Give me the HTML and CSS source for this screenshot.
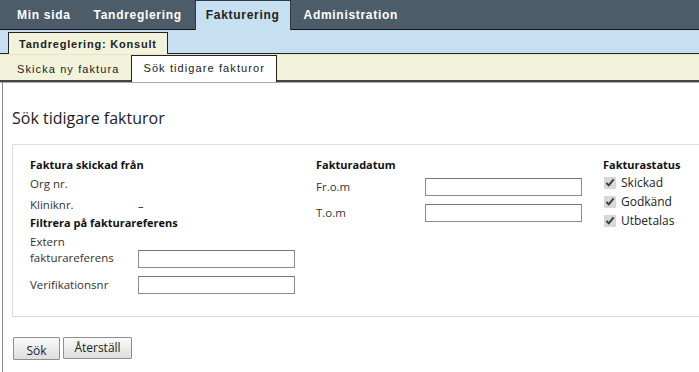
FILE: index.html
```html
<!DOCTYPE html>
<html lang="sv">
<head>
<meta charset="utf-8">
<title>Sök tidigare fakturor</title>
<link rel="stylesheet" href="styles.css">
</head>
<body>
<nav class="topnav">
  <a class="topnav-item">Min sida</a>
  <a class="topnav-item">Tandreglering</a>
  <a class="topnav-item is-active">Fakturering</a>
  <a class="topnav-item">Administration</a>
</nav>
<div class="subnav">
  <a class="subnav-item is-active">Tandreglering: Konsult</a>
</div>
<div class="tabs">
  <a class="tab">Skicka ny faktura</a>
  <a class="tab is-active">Sök tidigare fakturor</a>
</div>
<main class="content">
  <h1 class="page-title">Sök tidigare fakturor</h1>
  <form class="search-box">
    <div class="col col-from">
      <h2 class="col-title">Faktura skickad från</h2>
      <div class="row row-org"><span class="label">Org nr.</span><span class="value"></span></div>
      <div class="row row-klinik"><span class="label">Kliniknr.</span><span class="value">–</span></div>
      <h2 class="col-title">Filtrera på fakturareferens</h2>
      <div class="row row-extern"><span class="label">Extern<br>fakturareferens</span><input class="field" type="text"></div>
      <div class="row row-verif"><span class="label">Verifikationsnr</span><input class="field" type="text"></div>
    </div>
    <div class="col col-date">
      <h2 class="col-title">Fakturadatum</h2>
      <div class="row row-from"><span class="label">Fr.o.m</span><input class="field" type="text"></div>
      <div class="row row-tom"><span class="label">T.o.m</span><input class="field" type="text"></div>
    </div>
    <div class="col col-status">
      <h2 class="col-title">Fakturastatus</h2>
      <label class="check"><input type="checkbox" checked><span>Skickad</span></label>
      <label class="check"><input type="checkbox" checked><span>Godkänd</span></label>
      <label class="check"><input type="checkbox" checked><span>Utbetalas</span></label>
    </div>
  </form>
  <div class="actions">
    <button class="btn btn-search" type="button">Sök</button>
    <button class="btn btn-reset" type="button">Återställ</button>
  </div>
</main>
</body>
</html>
```
FILE: styles.css
```css
html, body {
  margin: 0;
  padding: 0;
  overflow: hidden;
  background: #fff;
}
body {
  font-family: "Open Sans", "DejaVu Sans", sans-serif;
  color: #222;
  height: 372px;
}

/* top navigation */
.topnav {
  display: flex;
  align-items: flex-end;
  height: 29px;
  background: #4c5c69;
  border-bottom: 1px solid #111;
  padding-left: 7px;
  font-family: "Liberation Sans", Arial, sans-serif;
  font-weight: bold;
  font-size: 12px;
  letter-spacing: 0.7px;
}
.topnav-item {
  display: flex;
  align-items: center;
  height: 24px;
  padding: 0 10px 2px;
  margin-right: 3px;
  color: #fff;
}
.topnav-item.is-active {
  background: #c6e0f2;
  color: #222;
  border: 1px solid #2d3a44;
  border-bottom: none;
  margin-bottom: -1px;
  height: 26px;
  padding-top: 1px;
}

/* second row */
.subnav {
  display: flex;
  align-items: flex-end;
  height: 23px;
  background: #c6e0f2;
  border-bottom: 1px solid #222;
  padding-left: 8px;
  font-family: "Liberation Sans", Arial, sans-serif;
  font-size: 11px;
  font-weight: bold;
  letter-spacing: 0.8px;
}
.subnav-item {
  display: flex;
  align-items: center;
  height: 21px;
  padding: 0 10px;
  background: #f3f3dc;
  border: 1px solid #222;
  border-bottom: none;
  margin-bottom: -1px;
  color: #222;
}

/* third row */
.tabs {
  display: flex;
  align-items: flex-end;
  height: 25px;
  background: #f3f3dc;
  border-top: 1px solid #e6e6c8;
  border-bottom: 2px solid #444;
  box-shadow: 0 1px 0 #aaa;
  padding-left: 6px;
  font-family: "Liberation Sans", Arial, sans-serif;
  font-size: 11px;
  letter-spacing: 1.1px;
}
.tab {
  display: flex;
  align-items: center;
  height: 22px;
  padding: 0 10px;
  color: #222;
  border: 1px solid transparent;
  border-bottom: none;
  margin-right: 1px;
}
.tab.is-active {
  background: #fff;
  border-color: #222;
  margin-bottom: -2px;
  height: 24px;
  padding: 0 11px 2px;
}

/* content */
.content {
  border-left: 1px solid #888;
  margin-left: 2px;
  padding: 26px 0 0 9px;
  height: 264px;
}
.page-title {
  margin: 0;
  font-weight: normal;
  font-size: 16px;
  line-height: 20px;
  color: #222;
}
.search-box {
  display: grid;
  grid-template-columns: 286px 287px 1fr;
  margin: 16px -20px 0 0;
  padding: 12px 0 22px 17px;
  border: 1px solid #dcdcdc;
  border-right: none;
  font-size: 11px;
}
.col-title {
  margin: 0;
  font-size: 11px;
  font-weight: bold;
  line-height: 16px;
  color: #111;
}
.row {
  display: grid;
  grid-template-columns: 108px 157px;
  align-items: center;
}
.label {
  font-size: 11.5px;
  line-height: 16px;
  color: #333;
}
.row-org { height: 22px; }
.row-klinik { height: 20px; }
.row-extern {
  margin-top: 3px;
  align-items: end;
}
.row-extern .label { padding-bottom: 2px; }
.row-verif { margin-top: 8px; }
.row-from { margin-top: 5px; }
.row-tom { margin-top: 8px; }
.col-date .row { grid-template-columns: 109px 157px; }

.field {
  box-sizing: border-box;
  width: 157px;
  height: 18px;
  margin: 0;
  border: 1px solid #8a8a8a;
  border-top-color: #777;
  background: #fff;
  font: inherit;
  padding: 0 3px;
}

.col-status { display: flex; flex-direction: column; }
.check {
  display: flex;
  align-items: center;
  height: 19px;
  font-size: 12px;
  color: #222;
}
.check input {
  width: 12px;
  height: 12px;
  margin: 0 5px 0 1px;
  accent-color: #d8d8d8;
}

.actions {
  display: flex;
  gap: 3px;
  margin-top: 20px;
  margin-left: 1px;
  align-items: flex-start;
}
.btn {
  font-family: "Open Sans", "DejaVu Sans", sans-serif;
  font-size: 12px;
  color: #222;
  background: linear-gradient(#fafafa, #dedede);
  border: 1px solid #8f8f8f;
  border-radius: 1px;
  padding: 0;
  height: 23px;
}
.btn-search { width: 47px; padding-top: 3px; }
.btn-reset { width: 69px; height: 22px; padding-bottom: 2px; }
```
